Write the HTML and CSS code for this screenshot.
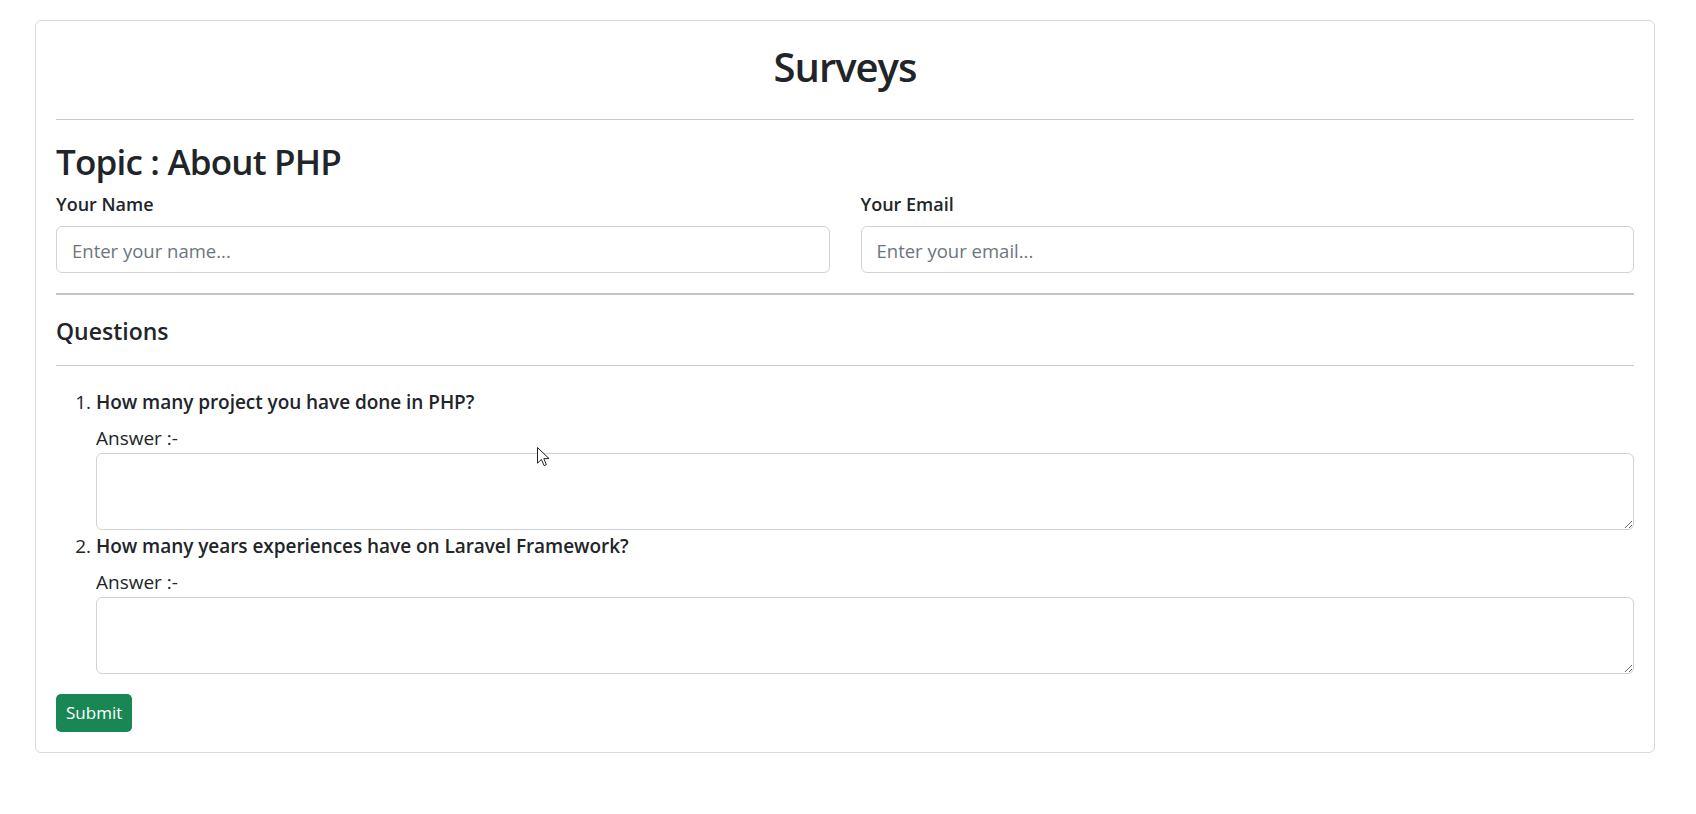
FILE: index.html
```html
<!DOCTYPE html>
<html lang="en">
<head>
<meta charset="utf-8">
<title>Surveys</title>
<link rel="stylesheet" href="styles.css">
</head>
<body>
<div class="card">
  <div class="card-body">
    <h2 class="title">Surveys</h2>
    <hr class="rule rule-top">
    <h3 class="topic">Topic : About PHP</h3>
    <div class="fields">
      <div class="field">
        <h6 class="field-label">Your Name</h6>
        <input class="control" type="text" placeholder="Enter your name...">
      </div>
      <div class="field">
        <h6 class="field-label">Your Email</h6>
        <input class="control" type="email" placeholder="Enter your email...">
      </div>
    </div>
    <hr class="rule rule-thick">
    <h5 class="section">Questions</h5>
    <hr class="rule rule-q">
    <ol class="questions">
      <li class="question">
        <div class="q-text">How many project you have done in PHP?</div>
        <div class="answer-label">Answer :-</div>
        <textarea class="control area" rows="2"></textarea>
      </li>
      <li class="question">
        <div class="q-text">How many years experiences have on Laravel Framework?</div>
        <div class="answer-label">Answer :-</div>
        <textarea class="control area" rows="2"></textarea>
      </li>
    </ol>
    <div class="actions"><button class="btn-submit" type="button">Submit</button></div>
  </div>
</div>
<svg class="cursor" width="13" height="20" viewBox="0 0 13 20" aria-hidden="true">
  <path d="M0.5 0.5 L0.5 16.2 L4.4 12.4 L7.1 18.6 L9.4 17.6 L6.8 11.6 L12 11.6 Z" fill="#ffffff" stroke="#222" stroke-width="1" stroke-linejoin="round"/>
</svg>
</body>
</html>
```
FILE: styles.css
```css
html, body {
  margin: 0;
  padding: 0;
  background: #ffffff;
}

body {
  font-family: "Open Sans", "Noto Sans", "Liberation Sans", sans-serif;
  color: #212529;
  position: relative;
  min-height: 814px;
}

.card {
  margin: 20px 0 0 35px;
  width: 1620px;
  box-sizing: border-box;
  border: 1px solid #d9d9d9;
  border-radius: 6px;
  background: #fff;
}

.card-body {
  padding: 20px;
  display: flex;
  flex-direction: column;
}

.title {
  margin: 0 0 8px;
  padding-top: 2px;
  font-size: 40px;
  line-height: 48px;
  font-weight: 600;
  text-align: center;
  letter-spacing: -1px;
}

.rule {
  margin: 20px 0;
  border: 0;
  border-top: 1px solid #c9c9c9;
  height: 0;
  width: 100%;
}

.rule-thick {
  border-top: 2px solid #c4c4c4;
}

.topic {
  margin: 0 0 9px;
  padding-top: 1px;
  font-size: 35px;
  line-height: 42px;
  font-weight: 600;
  letter-spacing: -0.8px;
}

.fields {
  display: grid;
  grid-template-columns: 1fr 1fr;
  column-gap: 31px;
}

.field {
  display: flex;
  flex-direction: column;
}

.field-label {
  margin: 0 0 10px;
  font-size: 18px;
  line-height: 24px;
  font-weight: 600;
}

.control {
  box-sizing: border-box;
  display: block;
  width: 100%;
  font-family: inherit;
  font-size: 18.5px;
  color: #212529;
  border: 1px solid #ced4da;
  border-radius: 6px;
  background: #fff;
  margin: 0;
}

input.control {
  height: 47px;
  padding: 1px 15px 0;
}

.control::placeholder {
  color: #6c757d;
}

.section {
  margin: 0;
  padding-top: 1px;
  font-size: 23px;
  line-height: 30px;
  font-weight: 600;
}

.rule-q {
  margin-top: 19px;
}

.questions {
  margin: 0 0 20px;
  padding-left: 40px;
}

.question {
  font-size: 19px;
  line-height: 30px;
}

.q-text {
  font-weight: 600;
  padding-top: 1px;
  margin-bottom: 5px;
  letter-spacing: -0.05px;
}

.answer-label {
  font-weight: 400;
  padding-top: 3px;
  line-height: 27px;
}

textarea.control {
  height: 77px;
  margin-top: 1px;
  padding: 7px 15px;
  resize: vertical;
}

.actions {
  display: flex;
}

.btn-submit {
  height: 38px;
  padding: 0 10px;
  border: 0;
  border-radius: 5px;
  background: #198754;
  color: #ffffff;
  font-family: inherit;
  font-size: 17px;
  line-height: 38px;
}

.cursor {
  position: absolute;
  left: 537px;
  top: 447px;
}
```
